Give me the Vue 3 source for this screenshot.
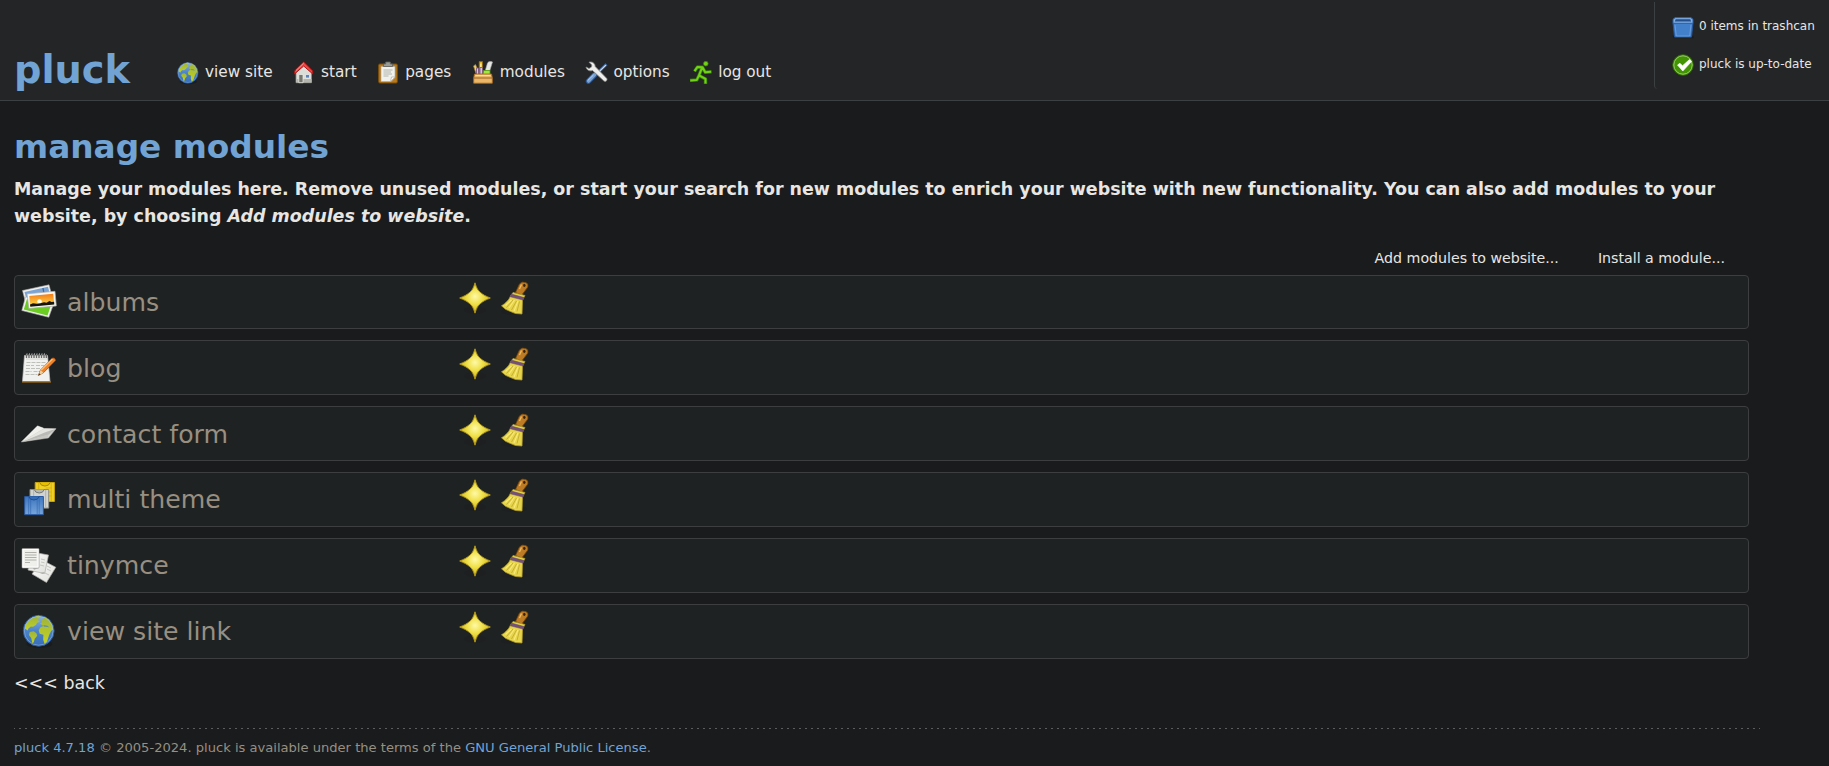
<script setup>
const nav = [
  { icon: 'globe', label: 'view site' },
  { icon: 'home', label: 'start' },
  { icon: 'pages', label: 'pages' },
  { icon: 'modules', label: 'modules' },
  { icon: 'options', label: 'options' },
  { icon: 'logout', label: 'log out' },
]
const modules = [
  { icon: 'albums', label: 'albums' },
  { icon: 'blog', label: 'blog' },
  { icon: 'contact', label: 'contact form' },
  { icon: 'theme', label: 'multi theme' },
  { icon: 'tinymce', label: 'tinymce' },
  { icon: 'globe', label: 'view site link' },
]
</script>

<template>
  <svg class="defs" width="0" height="0" aria-hidden="true">
    <defs>
      <linearGradient id="g-sea" x1="0" y1="0" x2="0" y2="1">
        <stop offset="0" stop-color="#8fb4de" /><stop offset=".5" stop-color="#4a83c8" /><stop offset="1" stop-color="#386fb8" />
      </linearGradient>
      <linearGradient id="g-land" x1="0" y1="0" x2="0" y2="1">
        <stop offset="0" stop-color="#9fb43a" /><stop offset="1" stop-color="#c3d322" />
      </linearGradient>
      <radialGradient id="g-star" cx=".5" cy=".45" r=".5">
        <stop offset="0" stop-color="#fff9a8" /><stop offset=".5" stop-color="#efe04a" /><stop offset="1" stop-color="#d3b91c" />
      </radialGradient>
      <linearGradient id="g-sun" x1="0" y1="0" x2="0" y2="1">
        <stop offset="0" stop-color="#f37a17" /><stop offset="1" stop-color="#fde24c" />
      </linearGradient>
      <linearGradient id="g-blue" x1="0" y1="0" x2="0" y2="1">
        <stop offset="0" stop-color="#3d76be" /><stop offset="1" stop-color="#78a6dc" />
      </linearGradient>
      <linearGradient id="g-paper" x1="0" y1="0" x2="1" y2="1">
        <stop offset="0" stop-color="#fff" /><stop offset="1" stop-color="#dededa" />
      </linearGradient>

      <symbol id="i-globe" viewBox="-.4 0 36 36">
        <ellipse cx="18" cy="31" rx="13" ry="4" fill="#111" opacity=".4" />
        <circle cx="17.3" cy="17.8" r="15.4" fill="url(#g-sea)" stroke="#2b5899" />
        <g fill="url(#g-land)">
          <path d="M3.500 15.500 4 12 7.300 8 11 5l4-1.500 2.500 1-1 2.500 2 1.500-3 1.500-1 2-3 1.700-2-.3-2.500 2-.8 2z" />
          <path d="M8.300 19l4-.7 2.700 2 .8 2.500-2.500 3-1 3.500-1.300 1-1.200-5.300-2.300-3z" />
          <path d="M18.500 10.500l2-1 0-3 3-2.500 4 2.500 3 5 1.200 5-2 1.500-2 4-2 6.500-2.500 2.200-1.400-4 .2-5-3.700-1-1-3.200 1.500-3 3-1.500-1-1z" />
          <path d="M14 3l3.500-.6 2 1.200-3 1.200z" />
        </g>
        <path d="M22 12.300l4 .5 2 1.600-2-.6-3.500-.4z" fill="#4a83c8" />
        <circle cx="17.300" cy="17.800" r="14.400" fill="none" stroke="#a9c8ee" stroke-opacity=".45" />
      </symbol>

      <symbol id="i-home" viewBox="0 0 24 24">
        <path d="M4 11.500 11.700 4l7.800 7.500V21.700H4z" fill="#dcdcd8" stroke="#8c8c88" stroke-width=".8" />
        <path d="M4.500 18h15v3.400h-15z" fill="#b6b6b0" />
        <path d="M6.800 13.500h4.200V21.700H6.800z" fill="#77776f" stroke="#f2f2ee" stroke-width=".7" />
        <path d="M13.500 13.500h4v3.500h-4z" fill="#5c83b8" stroke="#f2f2ee" stroke-width=".7" />
        <path d="M11.700 1 2.500 10v2.900L11.700 5l9 7.900V10z" fill="#ef4848" stroke="#b71212" stroke-linejoin="round" />
        <path d="M11.700 2 4 9.500" stroke="#ff9a92" />
      </symbol>

      <symbol id="i-pages" viewBox="0 0 24 24">
        <rect x="2.700" y="3" width="18.600" height="19" rx="1.200" fill="#b87a1c" stroke="#7f4f08" />
        <path d="M5 5.500h14V16.500l-4 4H5z" fill="#f0f0ec" stroke="#a9a9a3" stroke-width=".6" />
        <path d="M19 16h-3.500L14.500 20.500z" fill="#fff" stroke="#aaa" stroke-width=".7" />
        <path d="M7.500 9h9M7.500 11h7.500M7.500 13h8.500M7.500 15h5" stroke="#aeaea8" stroke-width=".9" />
        <path d="M7.500 5.500V3h2.200V1h4.600v2h2.200v2.500z" fill="#9b9c96" stroke="#60615c" stroke-width=".8" />
      </symbol>

      <symbol id="i-modules" viewBox="0 0 24 24">
        <path d="M2.500 5 4.500 3.500l4 9H5z" fill="#ecd079" stroke="#a47f29" stroke-width=".7" />
        <path d="M8.200.5h3.300v12H8.200z" fill="#e4b72d" stroke="#8f6a0b" stroke-width=".8" />
        <path d="M9.200 2.500h1.300v5H9.200z" fill="#fff0a0" />
        <path d="M16.500 2c1-1.500 3-1.700 5-1L18.500 10.500h-4.500z" fill="#e7e7e3" stroke="#aaa" stroke-width=".6" />
        <path d="M5.500 7h2v7h-2zM9 6.500h2.500v7H9z" fill="#d7c4dc" stroke="#75507b" stroke-width=".8" />
        <path d="M12.500 9.500h6.500v4h-7z" fill="#a2e63f" stroke="#4e9a06" stroke-width=".8" />
        <path d="M3.500 13h17l.8 4v5.200H2.700v-5.200z" fill="#e9b76a" stroke="#a76a20" stroke-width=".9" />
        <path d="M3 17h18" stroke="#9d611d" />
        <path d="M4.500 14.500h15" stroke="#ffdda4" />
      </symbol>

      <symbol id="i-options" viewBox="0 0 24 24">
        <path d="M22.500 3.300 13 12.500" stroke="#3f6fae" stroke-width="2.800" />
        <path d="M21.800 4.200 13 12.700" stroke="#d5e1f0" stroke-width="1.100" />
        <path d="M10.500 14 4.500 20.200" stroke="#29548f" stroke-width="5.400" stroke-linecap="round" />
        <path d="M10.500 13.800 4.500 20" stroke="#779fd0" stroke-width="3.600" stroke-linecap="round" />
        <path d="M9.500 14 3.900 19.400" stroke="#bdd2ec" stroke-width=".9" />
        <path d="M5 1.200c3-.9 6 .7 6.200 4.300L22.800 17.500c1 1.600-1 3.700-2.800 2.600L8.500 9.500C5.500 10.600 2.500 9 2 6l3 1.500 2.500-1.500.3-2z" fill="#eeeeec" stroke="#888a85" stroke-width=".8" />
      </symbol>

      <symbol id="i-logout" viewBox="0 .6 24 24">
        <g fill="none" stroke-linejoin="round">
          <path d="M5.500 11l3-4.500 5 .3 2.700 5 6.300-.4M12.800 8 10 15 16.500 18.500V23.500M10 15 7.800 19.500 1 20" stroke="#347d04" stroke-width="3.400" />
          <path d="M5.500 10.700l3-4.200 5 .3 2.700 5 6-.4M12.800 8 10 15l6.500 3.500V23M10 15l-2.200 4.500-6.500.5" stroke="#72d216" stroke-width="2" />
        </g>
        <circle cx="16.800" cy="3.300" r="2.400" fill="#72d216" stroke="#347d04" stroke-width=".7" />
      </symbol>

      <symbol id="i-trash" viewBox="0 -.8 24 24">
        <path d="M1.500 20h21v2.500H3z" fill="#111" opacity=".5" />
        <path d="M2 7l1.500 14.300h17L22 7z" fill="#4380cb" stroke="#23569b" />
        <path d="M4 9l1.300 11.200h13.400L20 9" fill="none" stroke="#77a8e3" stroke-width=".7" />
        <path d="M4.200 1.800h15.600L22 3.500v4H2v-4z" fill="#7facdf" stroke="#295fa8" />
        <path d="M4.700 3.500h14.600l.8 2.200H3.800z" fill="#244f8a" />
      </symbol>

      <symbol id="i-ok" viewBox="0 0 24 24">
        <circle cx="12" cy="12" r="10.300" fill="#429404" stroke="#2f6800" />
        <circle cx="12" cy="12" r="9.200" fill="none" stroke="#a5d07a" stroke-width=".9" />
        <path d="M6.500 12 9 10.300l2.500 2.500 7-6.300 2 2L11.800 18z" fill="#fff" stroke="#f6fff0" stroke-width=".7" />
      </symbol>

      <symbol id="i-albums" viewBox="0 0 36 36">
        <path d="M1.500 6.500 28 .8l4.500 17L6 24z" fill="#f1f1ef" stroke="#a9aaa6" stroke-width=".6" />
        <path d="M3.500 8 27 2.800l3 12L7 21z" fill="#7ba4d6" />
        <path d="M22 4l1 6" stroke="#41688f" stroke-width="1.300" />
        <path d="M4.500 13 .8 26.500l27 6.800L34 16z" fill="#f2f2f0" stroke="#a9aaa6" stroke-width=".6" />
        <path d="M6 15 2.800 25.500 26.500 31.500l3-9z" fill="#6bcd22" />
        <path d="M6 9.800 34 7.300l1.300 14.600-27.500 2.600z" fill="#f7f7f4" stroke="#aaaba6" stroke-width=".7" />
        <path d="M8.300 11.900 32.200 9.700l1 10.300-24 2.300z" fill="url(#g-sun)" />
        <circle cx="18.500" cy="17.500" r="2.300" fill="#fffde2" />
        <path d="M9 20.500l3-1.200 4 .5 3.500-.6 3.500-1 2.500.5 3-1.800 2 1.100 2.600-.3.200 2.800-24 2.200z" fill="#16150c" />
      </symbol>

      <symbol id="i-blog" viewBox="0 0 36 36">
        <path d="M3.500 5.500h23l2.500 26H1.500z" fill="#f1f1ef" stroke="#c2c2be" stroke-width=".7" />
        <path d="M1 31.900h29" stroke="#a96f13" stroke-width="1.400" />
        <path d="M5 9h21" stroke="#d1d1cb" />
        <path d="M5.500 12.500h20M5 15.500h8m2 0h8M5 18.500h14M4.500 21.500h6m2 0h7M4.500 24.500h12" stroke="#b8b8b3" stroke-width=".9" stroke-dasharray="4 1" />
        <path d="M5.500 4v4m2.500-4v4m2.500-4v4M13 4v4m2.500-4v4M18 4v4m2.500-4v4M23 4v4m2.300-4v4" stroke="#696b68" stroke-width="1.400" />
        <path d="M5.500 4h1m1.500 0h1m1.500 0h1m1.500 0h1m1.500 0h1m1.500 0h1m1.500 0h1m1.500 0h1" stroke="#d7d7d3" />
        <path d="M17.300 25.500 19.500 20 31 8.300q3-1 3.500 2.200L22.500 22.700z" fill="#ec832d" stroke="#a85114" stroke-width=".8" />
        <path d="M20.300 20 31.500 9" stroke="#ffc078" stroke-width="1.200" />
        <path d="M17.300 25.500 19.500 20l3 2.700z" fill="#efcf9b" />
        <path d="M17.300 25.500l.9-2.300 1.400 1.300z" fill="#333" />
      </symbol>

      <symbol id="i-contact" viewBox="0 .5 36 36">
        <path d="M.3 26.500 16.500 10.300 23.500 13 35 13.200 27.500 22.500z" fill="#d4d4d1" stroke="#9b9c98" stroke-width=".6" />
        <path d="M.5 26.300 23 12.700l-6.500-2.300z" fill="#efefec" />
        <path d="M.5 26.500 25 15.500 35 13.300l-8 6.200z" fill="#babbb7" />
        <path d="M.5 26.500 23.500 13 35 13.200 25 16.500z" fill="#e4e4e1" />
        <path d="M.5 26.500 26.500 22l1-3z" fill="#c6c7c2" />
      </symbol>

      <symbol id="i-theme" viewBox="-.7 0 36 36">
        <g stroke-width="1">
          <path d="M13.500 1.500h19.200v19H13.500z" fill="#f0cf28" stroke="#c9a307" />
          <path d="M17 2v18M29.500 2v18M24 7h6M24 11h6M24 15h6" stroke="#d9b511" />
          <path d="M18 1.500q1 3.500 5.200 3.500t5.300-3.500" fill="#e7c000" stroke="#a78600" />
          <path d="M8.300 8.500H27v18.600H8.300z" fill="#d3d4cf" stroke="#898b86" />
          <path d="M12 9v17M24 9v17" stroke="#b1b2ad" />
          <path d="M12.500 8.500q1 3.500 5 3.500t5-3.500" fill="#b7b8b2" stroke="#777973" />
          <path d="M3 15.500h18.700v18.200H3z" fill="url(#g-blue)" stroke="#2858a0" />
          <path d="M7 16v17.500M17.500 16v17.500M9 18v15M15.500 18v15" stroke="#2e63ad" stroke-opacity=".6" />
          <path d="M7 15.500q1 3.500 5.200 3.500t5.300-3.500" fill="#356db6" stroke="#244f8d" />
        </g>
      </symbol>

      <symbol id="i-tinymce" viewBox="0 0 36 36">
        <g stroke="#aaaaa6" stroke-width=".7">
          <path d="M21 13 34.800 20.300 25.500 35.500 11 27z" fill="url(#g-paper)" />
          <path d="M11 5l16.500 3-3.800 18.500L7 23z" fill="url(#g-paper)" />
          <rect x="1" y="1.500" width="17" height="19.500" rx=".8" fill="#efefec" stroke="#8f908c" />
        </g>
        <rect x="2" y="2.500" width="15" height="17.500" fill="none" stroke="#fff" />
        <path d="M4 5.500h11.500M4 8h11.500M4 10.500h11.500M4 13h11.500M4 15.500h5" stroke="#b0b0ac" />
        <path d="M20 12l4 1M20 15l3.500.8M19 18l4 1M26 19l4 2M26 22l4 2M24 26l4 2" stroke="#c4c4c0" />
        <path d="M12 21h6l-5 1.800M19 26l5-1-2 2z" fill="#aaa" />
      </symbol>

      <symbol id="i-star" viewBox="0 0 36 36">
        <ellipse cx="18" cy="30" rx="11" ry="4" fill="#111" opacity=".15" />
        <path d="M18 2.800C19.500 8 20.800 10.500 23.500 12.500 26 14.800 29 16.300 33.300 18 29 19.700 26 21.200 23.500 23.500 20.800 25.500 19.500 28 18 33.200 16.500 28 15.200 25.500 12.500 23.500 10 21.200 7 19.700 2.700 18 7 16.300 10 14.800 12.500 12.500 15.200 10.500 16.500 8 18 2.800z" fill="url(#g-star)" stroke="#ad941a" stroke-linejoin="round" />
      </symbol>

      <symbol id="i-broom" viewBox="0 0 36 36">
        <ellipse cx="17" cy="32" rx="13" ry="3" fill="#111" opacity=".15" />
        <path d="M18.500 12.500 22.500 4q2.500-3 6.300-1.400 3 1.200 2 4.400L24.800 15z" fill="#bd7b26" stroke="#754609" stroke-width=".8" />
        <path d="M22.500 9l2-4.500" stroke="#efbb62" stroke-width="1.300" />
        <ellipse cx="27.300" cy="5.300" rx="1.200" ry="1.600" fill="#392303" />
        <path d="M16 12.500l12 3-2.500 4.500-.5 14-6.500-.5-5-2-5-2.200-4-3.500C9 23 12.500 19 13.500 16z" fill="#e6d54a" stroke="#b09a28" stroke-width=".8" stroke-linejoin="round" />
        <path d="M16 20 9.500 27.500M19.500 21l-5 9M22.500 21.500l-2.500 10" stroke="#c0a62c" stroke-width=".8" />
        <path d="M17.500 20l-5.500 8M21 21l-4 10M14.500 20l-6 5.500" stroke="#f8ea7c" stroke-width="1.100" />
        <path d="M14.200 14 27 17.500l-.8 2.600-12.800-3.300z" fill="#75507b" stroke="#5f4064" stroke-width=".5" />
      </symbol>
    </defs>
  </svg>

  <header class="top">
    <div class="brand">pluck</div>
    <nav class="menu">
      <a v-for="n in nav" :key="n.label" class="menu-item">
        <svg class="ico-sm"><use :href="'#i-' + n.icon" /></svg>
        <span>{{ n.label }}</span>
      </a>
    </nav>
    <aside class="status">
      <a class="status-item"><svg class="ico-sm"><use href="#i-trash" /></svg><span>0 items in trashcan</span></a>
      <a class="status-item"><svg class="ico-sm"><use href="#i-ok" /></svg><span>pluck is up-to-date</span></a>
    </aside>
  </header>

  <main class="content">
    <h1>manage modules</h1>
    <p class="intro">Manage your modules here. Remove unused modules, or start your search for new modules to enrich your website with new functionality. You can also add modules to your website, by choosing <em>Add modules to website</em>.</p>
    <div class="links"><a>Add modules to website...</a><a>Install a module...</a></div>
    <ul class="list">
      <li v-for="m in modules" :key="m.label" class="row">
        <svg class="ico"><use :href="'#i-' + m.icon" /></svg>
        <span class="name">{{ m.label }}</span>
        <svg class="ico action"><use href="#i-star" /></svg>
        <svg class="ico action"><use href="#i-broom" /></svg>
      </li>
    </ul>
    <a class="back">&lt;&lt;&lt; back</a>
    <footer><a>pluck 4.7.18</a> © 2005-2024. pluck is available under the terms of the <a>GNU General Public License</a>.</footer>
  </main>
</template>

<style>
body {
  background: #1a1b1d;
}
</style>

<style scoped>
* {
  box-sizing: border-box;
}
.defs {
  position: absolute;
}
.top,
.content {
  font-family: "DejaVu Sans", sans-serif;
  color: #e8e6e3;
}
.top {
  display: flex;
  align-items: flex-start;
  height: 101px;
  padding-left: 14px;
  background: #242527;
  border-bottom: 1px solid #3c4042;
}
.brand {
  width: 162px;
  margin-top: 48px;
  font-size: 38.300px;
  line-height: 44px;
  font-weight: bold;
  color: #71a3d4;
}
.menu {
  display: flex;
  gap: 19.500px;
  margin-top: 60px;
}
.menu-item {
  display: flex;
  gap: 5px;
  font-size: 15.280px;
  line-height: 24px;
}
.ico-sm {
  flex: none;
  width: 24px;
  height: 24px;
}
.menu-item .ico-sm {
  margin-top: 1px;
}
.status {
  display: flex;
  flex-direction: column;
  gap: 14px;
  width: 175px;
  height: 87px;
  margin: 2px 0 0 auto;
  padding: 13px 0 0 16px;
  border-left: 1px solid #3c4042;
  border-bottom-left-radius: 4px;
}
.status-item {
  display: flex;
  gap: 4px;
  font-size: 12px;
  line-height: 23px;
  white-space: nowrap;
}
.content {
  width: 1760px;
  padding: 26px 0 0 14px;
}
h1 {
  margin: 0;
  font-size: 32.760px;
  line-height: 40px;
  color: #71a3d4;
}
.intro {
  margin: 9px 0 0;
  font-size: 17.450px;
  line-height: 27px;
  font-weight: bold;
}
.links {
  display: flex;
  justify-content: flex-end;
  gap: 39px;
  margin-top: 18px;
  padding-right: 35px;
  font-size: 14.200px;
  line-height: 20px;
}
.list {
  display: flex;
  flex-direction: column;
  gap: 11px;
  width: 1735px;
  margin: 7px 0 0;
  padding: 0;
  list-style: none;
}
.row {
  display: flex;
  align-items: flex-start;
  height: 55px;
  padding: 8px 6px 0;
  background: #1f2223;
  border: 1px solid #3c3e40;
  border-radius: 4px;
}
.row:first-child {
  height: 54px;
}
.row:nth-child(2),
.row:nth-child(3) {
  padding-top: 9px;
}
.ico {
  flex: none;
  width: 36px;
  height: 36px;
}
.name {
  width: 390px;
  height: 27px;
  margin: 5px 0 0 10px;
  overflow: hidden;
  font-size: 25.200px;
  line-height: 27px;
  color: #988f81;
}
.action {
  margin: -4px 4px 0 0;
}
.back {
  display: block;
  margin-top: 14px;
  font-size: 17.450px;
  line-height: 20px;
}
footer {
  margin-top: 35px;
  padding-top: 11px;
  font-size: 13.090px;
  line-height: 18px;
  color: #988f81;
  background: repeating-linear-gradient(90deg, #5b5d5f 0 1px, transparent 1px 5px, #5b5d5f 5px 6px) top left / 100% 1px no-repeat;
}
footer a {
  color: #71a3d4;
}
</style>
